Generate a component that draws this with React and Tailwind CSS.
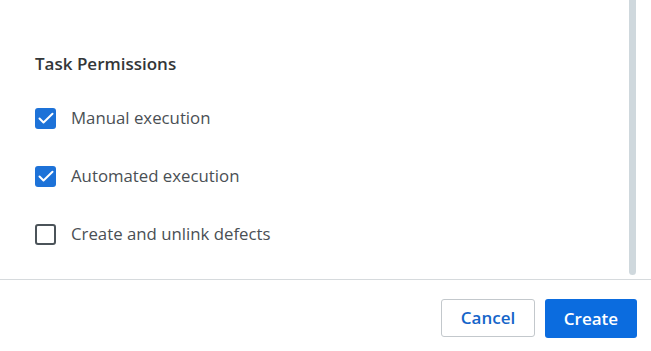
import React from 'react';

const Check = () => (
    <svg viewBox="0 0 20 20" className="w-[20px] h-[20px]" fill="none">
        <path d="M3.5 10.5l4 4L16.5 5.8" stroke="white" strokeWidth="2" strokeLinecap="round" strokeLinejoin="round" />
    </svg>
);

const Row = ({ checked, label }) => (
    <label className="flex items-center gap-[15px] h-[20px]">
        {checked ? (
            <span className="w-[21px] h-[21px] rounded-[3px] bg-[#1d72d8] flex items-center justify-center">
                <Check />
            </span>
        ) : (
            <span className="w-[21px] h-[21px] rounded-[3px] border-2 border-[#4b5359] bg-white" />
        )}
        <span className="text-[16.8px] leading-[20px] text-[#4a4f54]">{label}</span>
    </label>
);

export default function App() {
    return (
        <div className="w-[651px] h-[351px] bg-white flex flex-col font-['Open_Sans',sans-serif]">
            <div className="h-[280px] flex border-b border-[#d6dadd]">
                <div className="flex-1 pl-[35px] pt-[54px]">
                    <h3 className="text-[17px] leading-[20px] font-semibold text-[#333638]">Task Permissions</h3>
                    <div className="mt-[34px] flex flex-col gap-[38px]">
                        <Row checked label="Manual execution" />
                        <Row checked label="Automated execution" />
                        <Row label="Create and unlink defects" />
                    </div>
                </div>
                <div className="w-[7px] mr-[15px] h-[275px] rounded-b-full bg-[#cfd8dd]" />
            </div>
            <div className="flex justify-end gap-[10px] pt-[19px] pr-[14px]">
                <button className="w-[94px] h-[38px] rounded-[3px] border border-[#c3c8cc] bg-white text-[17px] font-semibold text-[#1565c9]">
                    Cancel
                </button>
                <button className="w-[92px] h-[39px] rounded-[3px] bg-[#0b6cdf] text-[17px] font-semibold text-white">
                    Create
                </button>
            </div>
        </div>
    );
}
